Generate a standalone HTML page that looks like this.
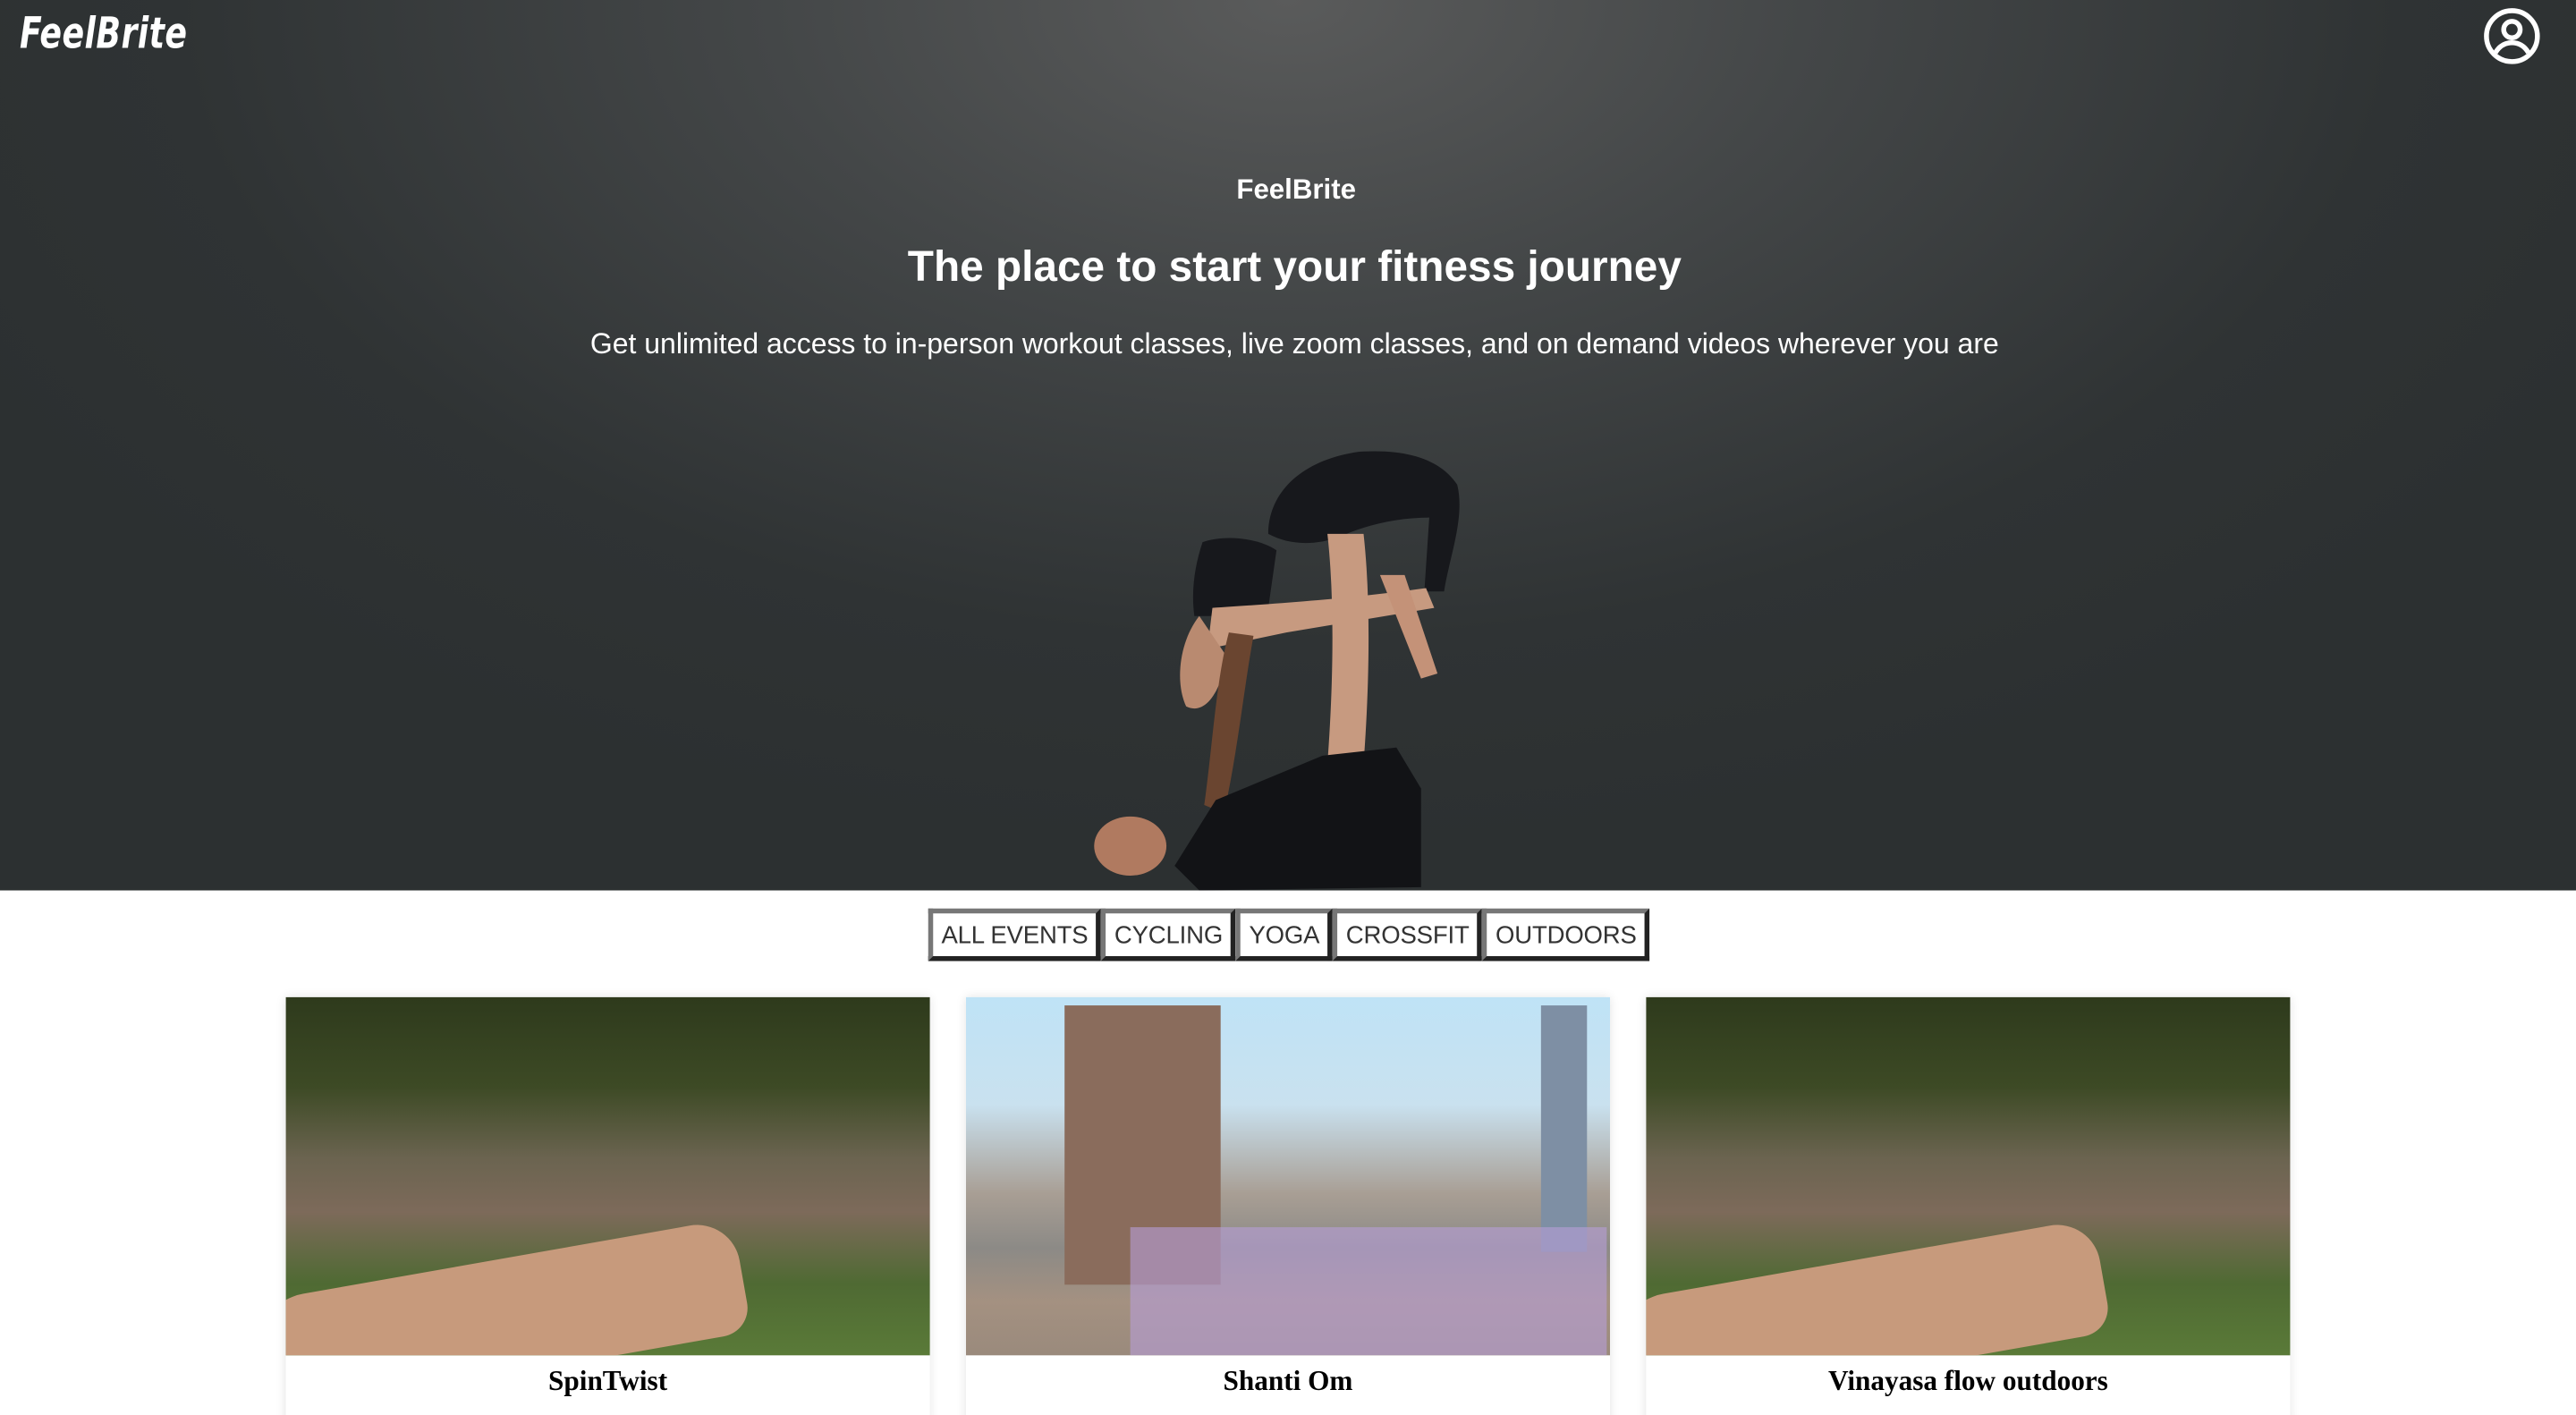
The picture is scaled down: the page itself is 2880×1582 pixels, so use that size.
<!DOCTYPE html>
<html><head><meta charset="utf-8"><style>
html,body{margin:0;padding:0;background:#fff;overflow:hidden}
body{width:2880px;height:1582px}
#w{width:1568px;height:861.3px;transform:scale(1.83673);transform-origin:0 0;position:relative;font-family:"Liberation Sans",sans-serif}
.hero{position:absolute;left:0;top:0;width:1568px;height:542px;background:radial-gradient(ellipse 900px 520px at 784px 0px,#5a5b5b 0%,#444748 35%,#2f3334 75%,#2c3031 100%)}
.logo{position:absolute;left:12px;top:6px;color:#fff;font-size:26px;font-weight:bold;font-style:italic;letter-spacing:0.3px;transform:scaleX(0.76);transform-origin:0 0;font-family:"DejaVu Sans","Liberation Sans",sans-serif}
.c{position:absolute;left:0;width:1568px;text-align:center;color:#fff}
.btns{position:absolute;left:565px;top:553px;display:flex}
.btns div{border:3px solid;border-color:#777 #222 #222 #777;background:#fff;color:#333;font-size:15px;height:26px;line-height:27px;padding:0 5px;margin-right:0;letter-spacing:-0.1px}
.card{position:absolute;top:607px;width:392px;height:260px;background:#fff;box-shadow:0 0 6px rgba(0,0,0,.12)}
.img{height:218px;position:relative;overflow:hidden}
.t{text-align:center;font-family:"Liberation Serif",serif;font-weight:bold;font-size:17px;margin-top:6px;color:#000}
.park{background:linear-gradient(180deg,#2e3a1c 0%,#3d4a25 25%,#6b6450 45%,#7d6a5a 60%,#4f6a33 80%,#5a7a38 100%)}
.city{background:linear-gradient(180deg,#bfe3f6 0%,#c9e1ef 30%,#a89e94 55%,#8c8a86 70%,#a49181 85%,#9a8a7c 100%)}
</style></head><body><div id="w">
<div class="hero">
<div class="logo">FeelBrite</div>
<svg style="position:absolute;left:1511px;top:4px" width="36" height="36" viewBox="0 0 36 36"><circle cx="18" cy="18" r="15.5" fill="none" stroke="#fff" stroke-width="3"/><circle cx="18" cy="14" r="5" fill="none" stroke="#fff" stroke-width="3"/><path d="M8 28c3-5 7-6 10-6s7 1 10 6" fill="none" stroke="#fff" stroke-width="3"/></svg>
<div class="c" style="top:106px;font-size:17px;font-weight:bold;left:5px">FeelBrite</div>
<div class="c" style="top:147px;font-size:26px;font-weight:bold;left:4px">The place to start your fitness journey</div>
<div class="c" style="top:199px;font-size:17.4px;left:4px">Get unlimited access to in-person workout classes, live zoom classes, and on demand videos wherever you are</div>
<svg style="position:absolute;left:660px;top:270px" width="240" height="272" viewBox="0 0 240 272">
<path d="M112 55c0-25 20-45 55-50 30-2 50 5 60 20 5 20-5 45-8 65l-12 0 3-45c-20 0-40 5-55 12-15 5-30 5-43-2z" fill="#17181c"/>
<path d="M72 60c15-5 35-2 45 5l-5 35c-15 5-30 5-45 5-2-15 0-30 5-45z" fill="#17181c"/>
<path d="M78 100c30-2 80-5 130-12l5 12-90 15-48 10z" fill="#c79a80"/>
<path d="M70 105c-12 15-15 40-8 55 10 5 20-5 25-30z" fill="#b98a70"/>
<path d="M88 115c-8 30-10 70-15 105l12 5c8-35 12-75 18-108z" fill="#6a4530"/>
<path d="M148 55c5 45 3 100 0 140l22 0c3-40 5-95 0-140z" fill="#c79a80"/>
<path d="M180 80l15 0 20 60-10 3z" fill="#c49278"/>
<path d="M145 190l45-5 15 25 0 60-135 2-15-15 25-40z" fill="#121316"/>
<ellipse cx="28" cy="245" rx="22" ry="18" fill="#b07a60"/>
</svg>
</div>
<div class="btns"><div>ALL EVENTS</div><div>CYCLING</div><div>YOGA</div><div>CROSSFIT</div><div>OUTDOORS</div></div>
<div class="card" style="left:174px"><div class="img park"><div style="position:absolute;left:-20px;top:160px;width:300px;height:70px;background:#c79a7c;border-radius:40px 30px 20px 40px;transform:rotate(-10deg)"></div></div><div class="t">SpinTwist</div></div>
<div class="card" style="left:588px"><div class="img city"><div style="position:absolute;left:60px;top:5px;width:95px;height:170px;background:#8a6c5c"></div><div style="position:absolute;left:350px;top:5px;width:28px;height:150px;background:#7e8fa4"></div><div style="position:absolute;left:100px;top:140px;width:290px;height:78px;background:#b89ed8;opacity:.6"></div></div><div class="t">Shanti Om</div></div>
<div class="card" style="left:1002px"><div class="img park"><div style="position:absolute;left:-20px;top:160px;width:300px;height:70px;background:#c79a7c;border-radius:40px 30px 20px 40px;transform:rotate(-10deg)"></div></div><div class="t">Vinayasa flow outdoors</div></div>
</div></body></html>
